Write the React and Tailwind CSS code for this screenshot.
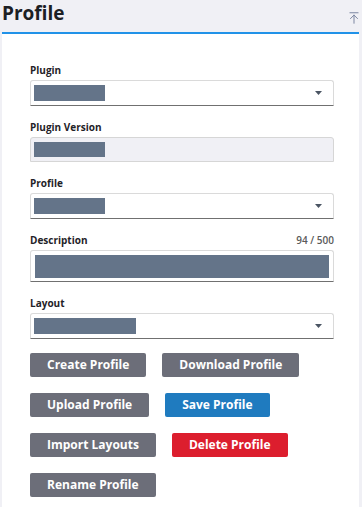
import React from 'react';
import { ArrowUpToLine } from 'lucide-react';

const Caret = () => (
  <svg width="7" height="4" viewBox="0 0 7 4" className="shrink-0">
    <path d="M0 0 L7 0 L3.5 4 Z" fill="#4b5563" />
  </svg>
);

const Label = ({ children, right }) => (
  <div className="flex justify-between items-baseline h-[14px] leading-[14px] mb-[3px]">
    <span className="text-[10px] font-bold text-[#1f2328]">{children}</span>
    {right && <span className="text-[10px] font-semibold text-[#5a5a5a]">{right}</span>}
  </div>
);

const SelectBox = ({ bar }) => (
  <div className="h-[26px] flex items-center justify-between border border-[#dadada] border-b-[#707070] rounded-t-[3px] bg-white pl-[3px] pr-[11px]">
    <div className={`h-[16px] bg-[#647489] ${bar}`} />
    <Caret />
  </div>
);

const Btn = ({ children, color = 'bg-[#6c6e79]' }) => (
  <button className={`h-[24px] px-[17px] rounded-[2px] text-white text-[12px] font-bold leading-none flex items-center ${color}`}>
    {children}
  </button>
);

export default function App() {
  return (
    <div className="min-h-screen bg-[#f0f0f5] pl-[2px] pr-[3px]" style={{ fontFamily: '"Open Sans", sans-serif' }}>
      <div className="h-[32px] flex justify-between items-start">
        <h1 className="pt-[1px] text-[19px] leading-[24px] font-bold text-[#1c2024]">Profile</h1>
        <ArrowUpToLine size={14} strokeWidth={1.5} className="text-[#6b7896] mt-[11px] mr-[-2px]" />
      </div>
      <div className="border-t-2 border-[#2192e8] bg-white pt-[29px] pl-[28px] pr-[25px] pb-[20px] min-h-[475px]">
        <div className="flex flex-col gap-[14px]">
          <div>
            <Label>Plugin</Label>
            <SelectBox bar="w-[71px]" />
          </div>
          <div>
            <Label>Plugin Version</Label>
            <div className="h-[25px] flex items-center border border-[#d6d6d6] rounded-t-[3px] bg-[#f0f0f5] pl-[3px]">
              <div className="h-[15px] w-[71px] bg-[#647489]" />
            </div>
          </div>
          <div>
            <Label>Profile</Label>
            <SelectBox bar="w-[71px]" />
          </div>
          <div>
            <Label right="94 / 500">Description</Label>
            <div className="h-[32px] flex items-center border border-[#dadada] border-b-[#707070] rounded-t-[3px] bg-white px-[4px]">
              <div className="h-[23px] w-full bg-[#647489]" />
            </div>
          </div>
          <div>
            <Label>Layout</Label>
            <SelectBox bar="w-[102px]" />
          </div>
          <div className="flex flex-col gap-[16px]">
            <div className="flex gap-[16px]">
              <Btn>Create Profile</Btn>
              <Btn>Download Profile</Btn>
            </div>
            <div className="flex gap-[16px]">
              <Btn>Upload Profile</Btn>
              <Btn color="bg-[#1f7bbf]">Save Profile</Btn>
            </div>
            <div className="flex gap-[16px]">
              <Btn>Import Layouts</Btn>
              <Btn color="bg-[#dc1e2e]">Delete Profile</Btn>
            </div>
            <div className="flex gap-[16px]">
              <Btn>Rename Profile</Btn>
            </div>
          </div>
        </div>
      </div>
    </div>
  );
}
